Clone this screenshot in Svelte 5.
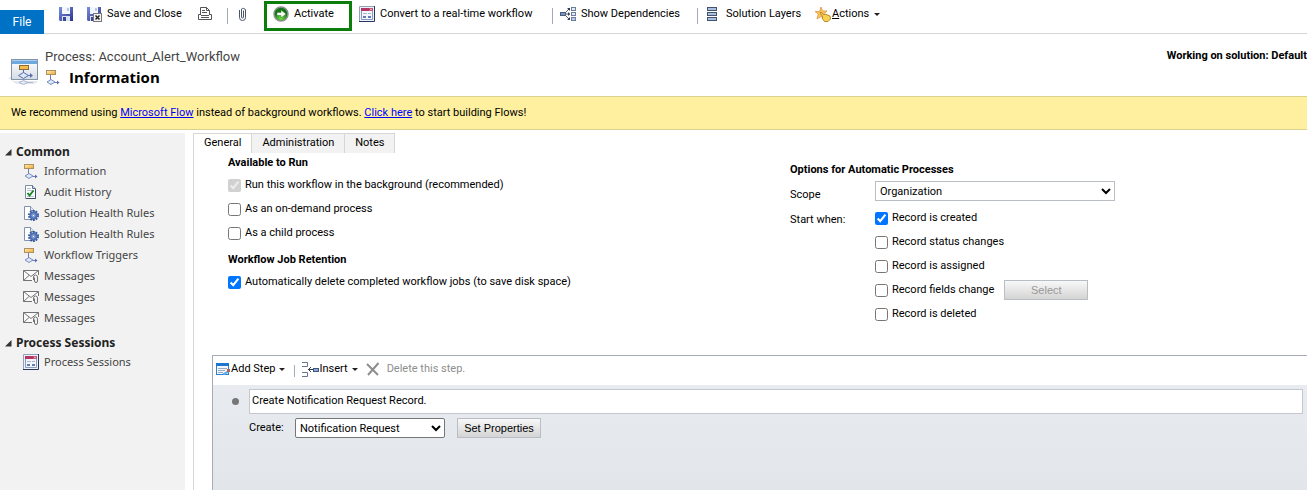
<script lang="ts">
  const common = [
    { icon: 'flow', label: 'Information' },
    { icon: 'audit', label: 'Audit History' },
    { icon: 'rules', label: 'Solution Health Rules' },
    { icon: 'rules', label: 'Solution Health Rules' },
    { icon: 'flow', label: 'Workflow Triggers' },
    { icon: 'mail', label: 'Messages' },
    { icon: 'mail', label: 'Messages' },
    { icon: 'mail', label: 'Messages' }
  ];
  const sessions = [{ icon: 'session', label: 'Process Sessions' }];
  const groups = [
    { title: 'Common', items: common },
    { title: 'Process Sessions', items: sessions }
  ];
  const tabs = ['General', 'Administration', 'Notes'];
  let activeTab = $state('General');
  let onDemand = $state(false);
  let child = $state(false);
  let autoDelete = $state(true);
  let scope = $state('Organization');
  let triggers = $state([
    { label: 'Record is created', on: true },
    { label: 'Record status changes', on: false },
    { label: 'Record is assigned', on: false },
    { label: 'Record fields change', on: false, pick: true },
    { label: 'Record is deleted', on: false }
  ]);
  let description = $state('Create Notification Request Record.');
  let entity = $state('Notification Request');
</script>

{#snippet icon(name: string)}
  {#if name === 'flow'}
    <svg class="icon" viewBox="0 0 16 16" aria-hidden="true">
      <defs>
        <linearGradient id="amber" x2="1" y2="1"><stop offset="0" stop-color="#fff0b8" /><stop offset="1" stop-color="#eda92c" /></linearGradient>
      </defs>
      <path d="M5.500 6v5M9 13.500h4" stroke="#6b7cb8" fill="none" />
      <rect x="1.500" y="1.500" width="9" height="4" fill="url(#amber)" stroke="#b09060" />
      <path d="M2 13l4-2.500 4 2.500-4 2.500z" fill="#dde8f8" stroke="#7a8dc4" />
      <path d="M12 11.500l2.500 2-2.500 2z" fill="#5a6cae" />
    </svg>
  {:else if name === 'audit'}
    <svg class="icon" viewBox="0 0 16 16" aria-hidden="true">
      <path d="M2.500 1.500h7l3 3v10h-10z" fill="#fff" stroke="#7d8da4" />
      <path d="M9.500 1.500v3h3" fill="#cfd9e8" stroke="#5d6f88" />
      <path d="M12.500 5v9.500H3" fill="none" stroke="#3d4d64" />
      <path d="M4 4.500h4M4 6.500h7M4 12.500h7" stroke="#b5c2d4" />
      <path d="M4.500 9l2 2.500L10.500 6.500" fill="none" stroke="#168a22" stroke-width="2" />
    </svg>
  {:else if name === 'rules'}
    <svg class="icon" viewBox="0 0 16 16" aria-hidden="true">
      <path d="M1.500 1.500h6l4 4v9h-10z" fill="#fff" stroke="#8292ae" />
      <path d="M7.500 1.500v4h4" fill="#e4eaf4" stroke="#8292ae" />
      <circle cx="10.500" cy="10.500" r="4.500" fill="none" stroke="#345499" stroke-width="2" stroke-dasharray="1.800 1.030" />
      <circle cx="10.500" cy="10.500" r="3" fill="#b9caea" stroke="#4c70b8" stroke-width="2" />
      <circle cx="10.500" cy="10.500" r="1.200" fill="#fff" stroke="#5474b9" />
    </svg>
  {:else if name === 'mail'}
    <svg class="icon" viewBox="0 0 16 16" aria-hidden="true">
      <path d="M15.500 7V2.500H.500v10H9" fill="#fafafa" stroke="#737373" />
      <path d="M.500 2.500L8 8.500l7.500-6M.500 12.500l5.500-5" fill="none" stroke="#737373" />
      <path d="M10.500 12V9a2 2 0 014 0v4a1.500 1.500 0 01-3 0V9.500" fill="none" stroke="#737373" />
    </svg>
  {:else if name === 'session'}
    <svg class="icon" viewBox="0 0 16 16" aria-hidden="true">
      <path d="M.500 15V.500H15" fill="none" stroke="#92a0b8" />
      <rect x="1" y="1" width="14" height="14" fill="#eef3fa" />
      <path d="M15.500 0v15.500H0" fill="none" stroke="#27365c" />
      <rect x="2" y="2" width="12" height="3" fill="#b43664" />
      <path d="M11 2.500l2 2M13 2.500l-2 2" stroke="#f6cedb" />
      <path d="M2.500 5v8.500h11V5" fill="#f2f6fc" stroke="#8b9bbb" />
      <path d="M4 7.500h4M9 7.500h3" stroke="#aab6ca" />
      <path d="M4 10h3v2H4zM9 10h3v2H9z" fill="#5e7cb5" />
    </svg>
  {:else if name === 'save' || name === 'saveclose'}
    <svg class="icon" viewBox="0 0 16 16" aria-hidden="true">
      <defs>
        <linearGradient id="disk" x2="1" y2="1"><stop offset="0" stop-color="#7c8fe0" /><stop offset="1" stop-color="#2a348c" /></linearGradient>
      </defs>
      <path d="M1 1h14v14H2l-1-1z" fill="url(#disk)" />
      <path d="M4 1h8v7H4z" fill="#f3f6fc" />
      <path d="M9 2h2v3H9z" fill="#bcc8e2" />
      <path d="M4 10h8v5H4z" fill="#dbe1f0" />
      <path d="M5 11h3v4H5z" fill="#3b4795" />
      {#if name === 'saveclose'}
        <rect x="7.500" y="7.500" width="8" height="8" fill="#f2f2f2" stroke="#777" />
        <path d="M9.500 9.500l4 4M13.500 9.500l-4 4" stroke="#222" stroke-width="1.500" />
      {/if}
    </svg>
  {:else if name === 'print'}
    <svg class="icon" viewBox="0 0 16 16" aria-hidden="true">
      <path d="M3.500 9V1.500h6l3 3V9" fill="#fff" stroke="#555" />
      <path d="M9.500 1.500v3h3M5 4.500h3M5 6.500h5" fill="none" stroke="#555" />
      <path d="M3.500 8.500h-2v5h13v-5h-2" fill="none" stroke="#555" />
      <path d="M4 9.500h8M4 11.500h8" stroke="#555" />
    </svg>
  {:else if name === 'clip'}
    <svg class="icon" viewBox="0 0 16 16" aria-hidden="true">
      <path d="M4.500 4v7.500a3 3 0 006 0V4a2.500 2.500 0 00-4-1V11a1 1 0 002 0V4.500" fill="none" stroke="#47566b" />
    </svg>
  {:else if name === 'go'}
    <svg class="icon" viewBox="0 0 16 16" aria-hidden="true">
      <defs>
        <radialGradient id="leaf" cy=".8"><stop offset="0" stop-color="#72e246" /><stop offset="1" stop-color="#15751a" /></radialGradient>
      </defs>
      <circle cx="8" cy="8" r="7" fill="url(#leaf)" stroke="#8a918a" stroke-width="1.500" />
      <path d="M4 6.500h4V4l5 4-5 4V9.500H4z" fill="#fff" stroke="#267a1e" stroke-width=".5" />
    </svg>
  {:else if name === 'deps'}
    <svg class="icon" viewBox="0 0 16 16" aria-hidden="true">
      <path d="M5 8h5M5 7l4-4M5 9l4 4" fill="none" stroke="#555f72" />
      <path d="M7 2h3v3zM7 14h3v-3zM8 6l2 2-2 2z" fill="#333c4c" />
      <rect x=".500" y="6.500" width="5" height="3" fill="#7893c4" stroke="#4b5c7d" />
      <rect x="11.500" y="1.500" width="4" height="3" fill="#e2eaf7" stroke="#6c7d9b" />
      <rect x="11.500" y="6.500" width="4" height="3" fill="#e2eaf7" stroke="#6c7d9b" />
      <rect x="11.500" y="11.500" width="4" height="3" fill="#b8c9e8" stroke="#6c7d9b" />
    </svg>
  {:else if name === 'layers'}
    <svg class="icon" viewBox="0 0 16 16" aria-hidden="true">
      <g fill="#a9bfe0" stroke="#44536c">
        <rect x="2.500" y="1.500" width="9" height="3" /><rect x="2.500" y="6.500" width="9" height="3" /><rect x="2.500" y="11.500" width="9" height="3" />
      </g>
    </svg>
  {:else if name === 'action'}
    <svg class="icon" viewBox="0 0 16 16" aria-hidden="true">
      <path d="M6 1l1.500 4H12L8.500 8l1 5L6 10.500 2 13l1.300-5L0 5.500h4.500z" fill="#ffc451" stroke="#e6a35c" />
      <path d="M6 6l3 3 1-1 5 2 .500 3-2.500 2.500H9.500L7 12l1-1-3-4z" fill="#f8d34f" stroke="#b88830" />
    </svg>
  {:else if name === 'step'}
    <svg class="icon" viewBox="0 0 16 16" aria-hidden="true">
      <rect x="1.500" y="2.500" width="12" height="11" fill="#f3f7fc" stroke="#2d7fd0" />
      <path d="M1 2h13v3H1z" fill="#1f76cf" />
      <path d="M3 7.500h9M3 9.500h7M3 11.500h5" stroke="#9aabc0" />
      <path d="M7 13l5-3 2 1-4 3z" fill="#5baee8" />
      <path d="M12 8h3v3h-3z" fill="#b5655a" />
    </svg>
  {:else if name === 'insert'}
    <svg class="icon insert" viewBox="0 0 17 16" aria-hidden="true">
      <path d="M0 1.500h5.500v4H0M0 11.500h5.500v4H0" fill="none" stroke="#66748c" />
      <path d="M6 8.500h6M9 6L6.500 8.500 9 11" fill="none" stroke="#333d4c" />
      <rect x="11.500" y="7.500" width="5" height="3" fill="#8ba8dc" stroke="#42567c" />
    </svg>
  {:else if name === 'delete'}
    <svg class="icon" viewBox="0 0 16 16" aria-hidden="true">
      <path d="M2 3l11 11M13.500 2L3 14" fill="none" stroke="#8e8e8e" stroke-width="2" />
    </svg>
  {/if}
{/snippet}

<div class="page">
  <header class="ribbon">
    <button class="file">File</button>
    <div class="tools">
      <button class="tool" aria-label="Save">{@render icon('save')}</button>
      <button class="tool wide">{@render icon('saveclose')}Save and Close</button>
      <button class="tool" aria-label="Print">{@render icon('print')}</button>
      <span class="rule"></span>
      <button class="tool" aria-label="Attach">{@render icon('clip')}</button>
      <button class="tool activate">{@render icon('go')}Activate</button>
      <button class="tool convert">{@render icon('session')}Convert to a real-time workflow</button>
      <span class="rule"></span>
      <button class="tool deps">{@render icon('deps')}Show Dependencies</button>
      <span class="rule"></span>
      <button class="tool layers">{@render icon('layers')}Solution Layers</button>
      <button class="tool tight">{@render icon('action')}<span><u>A</u>ctions</span><i class="caret"></i></button>
    </div>
  </header>

  <section class="heading">
    <svg class="emblem" viewBox="0 0 32 32" aria-hidden="true">
      <defs>
        <linearGradient id="pane" x2="0" y2="1"><stop offset="0" stop-color="#fff" /><stop offset="1" stop-color="#d5dce4" /></linearGradient>
      </defs>
      <path d="M0 23l5-3v6zM4 26h26l-3 3H8z" fill="#e6e9ed" />
      <rect x="3.500" y="4.500" width="26" height="20" fill="url(#pane)" stroke="#8395a8" />
      <path d="M4 5h25v4H4z" fill="#6fa8dc" /><path d="M4 5h25v1H4z" fill="#a8cdf0" />
      <path d="M15.500 14v5M19 20.500h5" stroke="#5a6cae" />
      <rect x="11.500" y="10.500" width="9" height="4" fill="#f4bc4c" stroke="#8d6c38" />
      <path d="M10.500 20.500l5-3 5 3-5 3z" fill="#dde8f8" stroke="#5a6cae" />
      <path d="M22 18l3 2.500-3 2.500z" fill="#5a6cae" />
      <path d="M11 27.500l4.500-2 4.500 2-4.500 2zM20 27.500h5" fill="none" stroke="#aab6d4" />
    </svg>
    <div class="names">
      <div class="record">Process: Account_Alert_Workflow</div>
      <h1>{@render icon('flow')}Information</h1>
    </div>
    <div class="solution">Working on solution: Default</div>
  </section>

  <p class="notice">
    We recommend using <a href="#flow">Microsoft Flow</a> instead of background workflows. <a href="#start">Click here</a> to start building Flows!
  </p>

  <div class="body">
    <nav>
      {#each groups as group}
        <h2><svg viewBox="0 0 7 7" aria-hidden="true"><path d="M6.500 0v6.500H0z" fill="#333" /></svg>{group.title}</h2>
        <ul>
          {#each group.items as item}
            <li><a href="#item">{@render icon(item.icon)}{item.label}</a></li>
          {/each}
        </ul>
      {/each}
    </nav>

    <main>
      <div class="tabs" role="tablist">
        {#each tabs as tab}
          <button role="tab" aria-selected={activeTab === tab} class:on={activeTab === tab} onclick={() => (activeTab = tab)}>{tab}</button>
        {/each}
      </div>

      <div class="form">
        <section class="left">
          <h3>Available to Run</h3>
          <label><input type="checkbox" checked disabled />Run this workflow in the background (recommended)</label>
          <label><input type="checkbox" bind:checked={onDemand} />As an on-demand process</label>
          <label><input type="checkbox" bind:checked={child} />As a child process</label>
          <h3 class="second">Workflow Job Retention</h3>
          <label><input type="checkbox" bind:checked={autoDelete} />Automatically delete completed workflow jobs (to save disk space)</label>
        </section>

        <section class="right">
          <h3>Options for Automatic Processes</h3>
          <label class="name" for="scope">Scope</label>
          <select id="scope" bind:value={scope}>
            <option>Organization</option>
          </select>
          <span class="name">Start when:</span>
          <div class="triggers">
            {#each triggers as trigger}
              <div class="trigger">
                <label><input type="checkbox" bind:checked={trigger.on} />{trigger.label}</label>
                {#if trigger.pick}<button class="push" disabled>Select</button>{/if}
              </div>
            {/each}
          </div>
        </section>
      </div>

      <section class="editor">
        <div class="bar">
          <button class="step">{@render icon('step')}Add Step<i class="caret"></i></button>
          <span class="rule"></span>
          <button class="step">{@render icon('insert')}Insert<i class="caret"></i></button>
          <button class="step remove" disabled>{@render icon('delete')}Delete this step.</button>
        </div>
        <div class="canvas">
          <span class="dot"></span>
          <div class="detail">
            <input class="text" type="text" aria-label="Step description" bind:value={description} />
            <div class="create">
              <label for="entity">Create:</label>
              <select id="entity" bind:value={entity}>
                <option>Notification Request</option>
              </select>
              <button class="push">Set Properties</button>
            </div>
          </div>
        </div>
      </section>
    </main>
  </div>
</div>

<style>
  :global(body) { background: #fff; }
  .page {
    display: flex;
    flex-direction: column;
    min-height: 100vh;
    font: 11px/16px "Segoe UI", Roboto, sans-serif;
    color: #000;
  }
  button, input, select { font: inherit; color: inherit; margin: 0; box-sizing: border-box; }
  button { padding: 0; border: 0; background: none; white-space: nowrap; }
  h1, h2, h3, ul, p { margin: 0; padding: 0; font-size: 11px; }
  .icon { width: 16px; height: 16px; flex: none; }
  .icon.insert { width: 17px; }
  .rule { width: 1px; height: 16px; background: #a5acb5; flex: none; }
  .caret { border: 3px solid transparent; border-top-color: #222; border-bottom: 0; margin-left: 4px; }

  .ribbon { display: flex; align-items: flex-end; height: 33px; border-bottom: 1px solid #d6d6d6; }
  .file { width: 44px; height: 24px; margin-bottom: -1px; background: #0072c6; color: #fff; font-size: 12px; }
  .tools { display: flex; align-items: center; height: 30px; margin: 0 0 2px 14px; }
  .tool { display: flex; align-items: center; gap: 5px; padding-bottom: 4px; }
  .tool + .tool { margin-left: 12px; }
  .tool.wide { width: 99px; }
  .tools .rule { margin: 0 7px 0 14px; }
  .tool.activate { width: 88px; height: 30px; padding: 0 6px 4px; border: 3px solid #0a7d0a; box-sizing: border-box; }
  .tool + .tool.activate { margin-left: 13px; }
  .tool + .tool.convert { margin-left: 7px; }
  .tool.tight { gap: 1px; }
  .tool.convert { width: 179px; }
  .tool.deps { width: 123px; }
  .tool.layers { width: 98px; }

  .heading { display: flex; height: 62px; padding-left: 8px; }
  .emblem { width: 32px; height: 32px; margin-top: 21px; flex: none; }
  .names { margin: 13px 0 0 5px; flex: 1; }
  .record { font-size: 13px; line-height: 20px; color: #444; white-space: nowrap; }
  h1 { display: flex; align-items: center; gap: 8px; font-family: "Segoe UI", "Open Sans", sans-serif; font-size: 15px; line-height: 20px; }
  .solution { margin-top: 14px; white-space: nowrap; font-weight: bold; }

  .notice { padding: 8px 11px; background: #fff09f; border: 1px solid #d7d38c; border-width: 1px 0; }
  .notice a { color: #00f; }

  .body { display: flex; flex: 1; padding-top: 3px; }
  nav { width: 185px; flex: none; box-sizing: border-box; padding: 9px 0 0 5px; background: #f2f2f2; font-family: "Segoe UI", "Noto Sans", sans-serif; font-size: 12px; }
  nav h2 { display: flex; align-items: center; gap: 4px; font-size: 12px; line-height: 20px; color: #222; }
  nav h2 svg { width: 7px; height: 7px; }
  nav ul { list-style: none; margin-bottom: 3px; }
  nav li { height: 21px; }
  nav a { display: flex; align-items: center; gap: 5px; padding-left: 18px; line-height: 18px; color: #444; text-decoration: none; white-space: nowrap; }

  main { flex: 1; min-width: 0; display: flex; flex-direction: column; margin-left: 8px; border-left: 1px solid #d6d6d6; }
  .tabs { display: flex; }
  .tabs button { height: 20px; padding: 0 10px 1px; border: 1px solid #d6d6d6; border-width: 1px 1px 0 0; background: #f2f2f2; }
  .tabs .on { background: #fff; }
  .form { display: grid; grid-template-columns: 562fr 517fr; padding-left: 34px; height: 202px; }
  h3 { line-height: 20px; }
  .form label { display: flex; align-items: center; height: 24px; gap: 4px; white-space: nowrap; }
  .form input { width: 13px; height: 13px; }
  .second { margin-top: 5px; }
  .right { display: grid; grid-template-columns: 85px 240px; grid-template-rows: 21px 20px 1fr; padding-top: 7px; }
  .right h3 { grid-column: 1 / 3; }
  .right > .name { height: 20px; padding-top: 7px; box-sizing: border-box; align-items: center; }
  select { height: 20px; padding: 0; background: #fff; border: 1px solid #767676; border-radius: 2px; }
  .right select { border-color: #b9bdc4; border-radius: 0; }
  .right > span.name { padding-top: 11px; }
  .triggers { padding-top: 5px; }
  .trigger { display: flex; gap: 10px; align-items: center; }
  .trigger label { height: 24px; }
  .push { width: 84px; height: 20px; border: 1px solid #b9bdc4; background: linear-gradient(#f8f8f8, #d4d4d4); font-family: "Liberation Sans", Arial, sans-serif; }
  .push:disabled { color: #999; }

  .editor { flex: 1; display: flex; flex-direction: column; margin-left: 18px; border: 1px solid #a5acb5; border-width: 1px 0 0 1px; }
  .bar { display: flex; align-items: center; height: 26px; padding: 0 0 3px 2px; }
  .step { display: flex; align-items: center; }
  .bar .rule { margin: 4px 7px 0 9px; height: 12px; }
  .remove { gap: 6px; margin-left: 7px; color: #8e8e8e; }
  .canvas { flex: 1; display: flex; align-items: flex-start; padding: 4px 4px 0 19px; background: linear-gradient(#e8ebf0, #e2e5ea); }
  .dot { width: 7px; height: 7px; margin: 9px 10px 0 0; border-radius: 50%; background: #777; }
  .detail { flex: 1; }
  .text { display: block; width: 100%; height: 25px; padding: 0 2px 3px; border: 1px solid #c3c7ce; background: #fff; }
  .create { display: flex; align-items: center; margin-top: 4px; }
  .create label { width: 46px; }
  .create select { width: 150px; margin-right: 12px; }
</style>
